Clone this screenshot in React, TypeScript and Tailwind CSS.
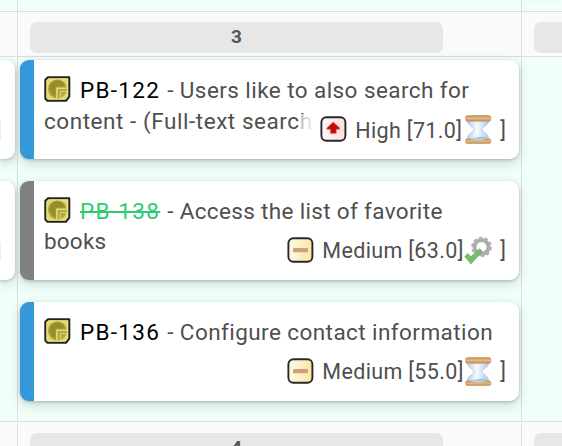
import type { ReactNode } from "react";

function StoryIcon() {
  return (
    <svg className="relative -top-px block h-[26px] w-[27px] shrink-0" viewBox="0 0 27 26">
      <path d="M4 1.2H25.3V20.6L22 24.8H3.4L1.3 22.6V3.8Z" fill="#e0d770" stroke="#24231f" strokeWidth="2" strokeLinejoin="round" />
      <path d="M3 4.8 5 2.9H23.6V19.8L20.8 23H4.6L3 21.6Z" fill="none" stroke="#eee68c" strokeWidth=".9" />
      <circle cx="13.4" cy="12.8" r="9.4" fill="#a99f3b" />
      <path d="M5.6 11.4a8 8 0 0 1 15-2.6l-1.8 1.8H11.4v8.6L8.4 19Z" fill="#978c2c" />
      <path d="M12.2 11.4H23V13H13.8V22.8H12.2Z" fill="#e6dc72" />
      <path d="M13.8 13H22.8A9.4 9.4 0 0 1 13.8 22.2Z" fill="#b2a844" />
      <path d="M16.4 21.8V15.4H22.8" fill="none" stroke="#e0d66c" strokeWidth="1" />
    </svg>
  );
}

function PriorityIcon({ high }: { high?: boolean }) {
  return (
    <svg className="block h-[26px] w-[27px] shrink-0" viewBox="0 0 27 26">
      <defs>
        <linearGradient id="mediumFill">
          <stop stopColor="#fffbea" />
          <stop offset="1" stopColor="#fde5a0" />
        </linearGradient>
        <linearGradient id="highFill">
          <stop stopColor="#fff8f8" />
          <stop offset="1" stopColor="#ffdede" />
        </linearGradient>
      </defs>
      <rect x="1.4" y="1.2" width="24" height="23.6" rx="5" fill={high ? "url(#highFill)" : "url(#mediumFill)"} stroke="#26282a" strokeWidth="1.9" />
      {high ? (
        <path d="M13.3 6 19.6 11.8V13.4H16.3V17.6H10.3V13.4H6.9V11.8Z" fill="#c20b0b" stroke="#e08a8a" strokeWidth=".8" />
      ) : (
        <rect x="6" y="11" width="15" height="4.2" rx=".4" fill="#cba47e" />
      )}
    </svg>
  );
}

function Hourglass() {
  return (
    <svg className="block h-[29px] w-[28px] shrink-0" viewBox="0 0 28 29">
      <defs>
        <linearGradient id="wood" x2="0" y2="1">
          <stop stopColor="#c08a4e" />
          <stop offset=".5" stopColor="#e3bb86" />
          <stop offset="1" stopColor="#c08348" />
        </linearGradient>
        <linearGradient id="glass">
          <stop stopColor="#b4cdec" />
          <stop offset=".45" stopColor="#f6fbff" />
          <stop offset="1" stopColor="#a9c6ea" />
        </linearGradient>
      </defs>
      <path d="M3.2 5.5H24.8C24.8 10.5 18 12 18 14.5S24.8 18.5 24.8 24.5H3.2C3.2 18.5 10 17 10 14.5S3.2 10.5 3.2 5.5Z" fill="url(#glass)" stroke="#b4cbea" />
      <path d="M9 23.5c1.5-1 4-1 7-1.5 3-.5 5-.6 6.5 1.5Z" fill="#9dbde8" />
      <rect x="1" y=".3" width="26.4" height="6.2" rx="2.8" fill="url(#wood)" />
      <rect x="1" y="23.6" width="26.4" height="5.2" rx="2.5" fill="url(#wood)" />
      <path d="M5 23.5h18c-3 2.6-15 2.6-18 0Z" fill="#b9d2f2" />
    </svg>
  );
}

function GearCheck() {
  return (
    <svg className="block h-[29px] w-[28px] shrink-0" viewBox="0 0 28 29">
      <circle cx="17.5" cy="11" r="7" fill="none" stroke="#ababab" strokeWidth="4" />
      <circle cx="17.5" cy="11" r="9" fill="none" stroke="#b0b0b0" strokeWidth="2.6" strokeDasharray="3.3 2.35" />
      <path d="M.8 20.6 3.8 17.6 6.8 20.8 15.7 12.8 18.3 15.4 7 27.8Z" fill="#75bf68" stroke="#60ad58" strokeWidth=".8" />
    </svg>
  );
}

type CardProps = {
  id: string;
  done?: boolean;
  high?: boolean;
  title: ReactNode;
  second?: ReactNode;
  priority: ReactNode;
};

function Card({ id, done, high, title, second, priority }: CardProps) {
  return (
    <article className={`relative h-[99px] w-[499px] rounded-[9px] border-l-[14px] bg-white pl-[10px] pt-[15px] text-[22.5px] leading-[30px] whitespace-nowrap shadow-[0_4px_12px_rgba(0,40,25,0.18),0_1px_3px_rgba(0,0,0,0.2)] ${done ? "border-[#808080]" : "border-[#3498db]"}`}>
      <div className="flex h-[30px] items-center">
        <StoryIcon />
        <span className={`ml-[9px] tracking-[1.3px] ${done ? "text-[#2ecc71] line-through decoration-2" : "text-black"}`}>{id}</span>
        <span className={`ml-[7px] ${done ? "tracking-[0.34px]" : "tracking-[0.43px]"}`}>{title}</span>
      </div>
      <div className={high ? "mt-[1px] tracking-[0.55px]" : "tracking-[0.2px]"}>{second}</div>
      <div className="absolute right-[13px] bottom-[15px] flex h-[30px] items-center bg-white pl-2 text-[21.5px]">
        {high && <div className="absolute right-full h-[30px] w-3 bg-linear-to-r from-white/60 to-white/90" />}
        <PriorityIcon high={high} />
        <span className={`ml-[8px] ${high ? "w-[109px] pt-1 tracking-[0.35px]" : "w-[142px] pt-0.5 tracking-[0.35px]"}`}>{priority}</span>
        {done ? <GearCheck /> : <Hourglass />}
        <span className={`ml-2 ${high ? "pt-1" : "pt-0.5"}`}>]</span>
      </div>
    </article>
  );
}

function Header({ label }: { label: string }) {
  return (
    <header className="flex h-[45px] shrink-0 border-b border-[#dcdddd] bg-[#fafafa]">
      <div className="w-[18px] shrink-0 border-r border-[#dcdddd]" />
      <div className="w-[504px] shrink-0 border-r border-[#dcdddd] pl-3 pt-[10px]">
        <div className="flex h-[31px] w-[413px] items-center justify-center rounded-[7px] bg-[#e7e7e7] text-[19px] font-bold text-[#555]">{label}</div>
      </div>
      <div className="min-w-0 grow overflow-hidden pl-3 pt-[10px]">
        <div className="h-[31px] w-[413px] rounded-[7px] bg-[#e7e7e7]" />
      </div>
    </header>
  );
}

function EdgeCard() {
  return (
    <div className="flex h-[99px] w-[15px] items-center rounded-r-[9px] bg-white pt-[42px] shadow-[0_4px_12px_rgba(0,40,25,0.18),0_1px_3px_rgba(0,0,0,0.2)]">
      <div className="h-[19px] w-px bg-[#eee]" />
    </div>
  );
}

export default function App() {
  return (
    <main className="flex h-[446px] w-[562px] flex-col overflow-hidden bg-[#f1fffa] font-['Roboto','Liberation_Sans',sans-serif] text-[#4f4f4f]">
      <div className="flex h-3 shrink-0 border-b border-[#dcdddd]">
        <div className="w-[18px] border-r border-[#dcdddd]" />
        <div className="w-[504px] border-r border-[#dcdddd]" />
        <div className="h-px grow shadow-[0_0_4px_rgba(0,0,0,0.12)]" />
      </div>
      <Header label="3" />
      <section className="flex h-[365px] shrink-0 border-b border-[#dcdddd]">
        <div className="flex w-[18px] shrink-0 flex-col gap-[22px] overflow-hidden border-r border-[#dcdddd] pt-[3px]">
          <EdgeCard />
          <EdgeCard />
        </div>
        <div className="flex w-[504px] shrink-0 flex-col gap-[22px] border-r border-[#dcdddd] pl-0.5 pt-[3px]">
          <Card id="PB-122" high title="- Users like to also search for" second="content - (Full-text search" priority="High [71.0]" />
          <Card id="PB-138" done title="- Access the list of favorite" second="books" priority="Medium [63.0]" />
          <Card id="PB-136" title="- Configure contact information" priority="Medium [55.0]" />
        </div>
        <div className="grow" />
      </section>
      <div className="bg-[#fafafa] pt-px"><Header label="4" /></div>
    </main>
  );
}
